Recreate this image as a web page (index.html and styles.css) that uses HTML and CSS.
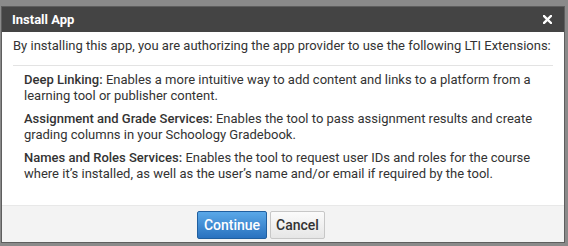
FILE: index.html
```html
<!DOCTYPE html>
<html>
<head>
<meta charset="utf-8">
<link rel="stylesheet" href="styles.css">
</head>
<body>
<div class="dialog">
  <div class="header">
    <span class="title">Install App</span>
    <svg class="close" width="9" height="9" viewBox="0 0 9 9"><path d="M1 1L8 8M8 1L1 8" stroke="#fff" stroke-width="2.4" stroke-linecap="square"/></svg>
  </div>
  <div class="content">
    <p class="intro">By installing this app, you are authorizing the app provider to use the following LTI Extensions:</p>
    <ul class="list">
      <li><strong>Deep Linking:</strong> Enables a more intuitive way to add content and links to a platform from a learning tool or publisher content.</li>
      <li><strong>Assignment and Grade Services:</strong> Enables the tool to pass assignment results and create grading columns in your Schoology Gradebook.</li>
      <li><strong>Names and Roles Services:</strong> Enables the tool to request user IDs and roles for the course where it’s installed, as well as the user’s name and/or email if required by the tool.</li>
    </ul>
  </div>
  <div class="footer">
    <button class="btn primary">Continue</button>
    <button class="btn secondary">Cancel</button>
  </div>
</div>
</body>
</html>
```
FILE: styles.css
```css
html, body {
  margin: 0;
  padding: 0;
}
body {
  background: #8a8a8a;
  width: 568px;
  height: 246px;
  box-sizing: border-box;
  padding: 6px 3px 3px 1px;
  font-family: Roboto, "Liberation Sans", sans-serif;
  color: #333;
}
.dialog {
  height: 100%;
  box-sizing: border-box;
  border: 1px solid #5e5e5e;
  background: #fff;
  display: flex;
  flex-direction: column;
}
.header {
  height: 25px;
  flex: none;
  background: #444;
  color: #fff;
  display: flex;
  align-items: center;
  justify-content: space-between;
  padding: 0 12px 0 10px;
}
.title {
  font-size: 13px;
  font-weight: 700;
}
.close {
  display: block;
}
.content {
  flex: 1;
  padding: 0 11px;
}
.intro {
  margin: 0;
  padding: 6px 0 11px;
  font-size: 13px;
  line-height: 16px;
  border-bottom: 1px solid #e3e3e3;
}
.list {
  list-style: none;
  margin: 0;
  padding: 6px 0 0 11px;
  font-size: 13px;
  line-height: 16px;
}
.list li {
  margin-bottom: 7px;
}
.list strong {
  font-weight: 500;
}
.footer {
  height: 37px;
  flex: none;
  box-sizing: border-box;
  background: #f3f3f3;
  border-top: 1px solid #e8e8e8;
  display: flex;
  justify-content: center;
  align-items: flex-start;
  gap: 3px;
  padding: 5px 44px 0 0;
}
.btn {
  font-family: Roboto, "Liberation Sans", sans-serif;
  font-size: 14px;
  font-weight: 500;
  height: 28px;
  border-radius: 2px;
  padding: 0;
}
.primary {
  color: #fff;
  width: 70px;
  background: linear-gradient(#5aa8e8, #2a72bf);
  border: 1px solid #205f9f;
}
.secondary {
  color: #333;
  width: 55px;
  background: linear-gradient(#fbfbfb, #e6e6e6);
  border: 1px solid #c7c7c7;
}
```
